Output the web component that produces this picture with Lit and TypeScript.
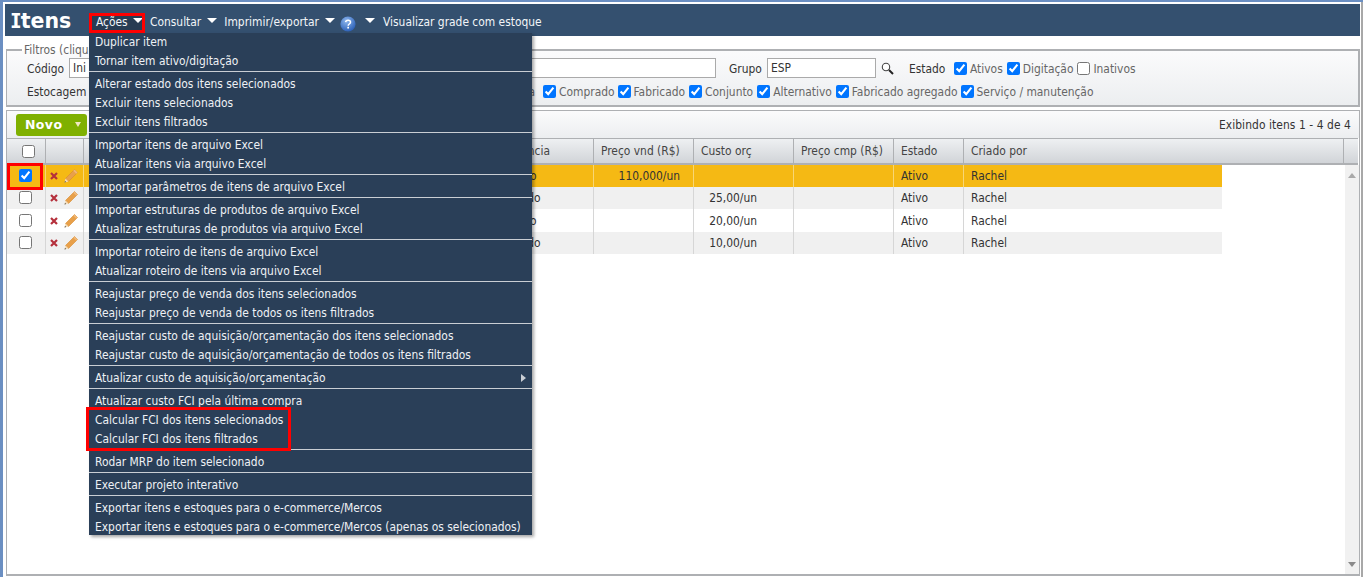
import { LitElement, html, css, svg } from "lit";
import { customElement } from "lit/decorators.js";

const MENU: (string | null)[] = [
  "Duplicar item", "Tornar item ativo/digitação", null,
  "Alterar estado dos itens selecionados", "Excluir itens selecionados", "Excluir itens filtrados", null,
  "Importar itens de arquivo Excel", "Atualizar itens via arquivo Excel", null,
  "Importar parâmetros de itens de arquivo Excel", null,
  "Importar estruturas de produtos de arquivo Excel", "Atualizar estruturas de produtos via arquivo Excel", null,
  "Importar roteiro de itens de arquivo Excel", "Atualizar roteiro de itens via arquivo Excel", null,
  "Reajustar preço de venda dos itens selecionados", "Reajustar preço de venda de todos os itens filtrados", null,
  "Reajustar custo de aquisição/orçamentação dos itens selecionados", "Reajustar custo de aquisição/orçamentação de todos os itens filtrados", null,
  "Atualizar custo de aquisição/orçamentação", null,
  "Atualizar custo FCI pela última compra", "Calcular FCI dos itens selecionados", "Calcular FCI dos itens filtrados", null,
  "Rodar MRP do item selecionado", null,
  "Executar projeto interativo", null,
  "Exportar itens e estoques para o e-commerce/Mercos", "Exportar itens e estoques para o e-commerce/Mercos (apenas os selecionados)",
];

const ROWS = [
  { sel: true, tipo: "Fabricado", vnd: "110,000/un", orc: "", h: 22 },
  { sel: false, tipo: "Comprado", vnd: "", orc: "25,00/un", h: 22 },
  { sel: false, tipo: "Fabricado", vnd: "", orc: "20,00/un", h: 23 },
  { sel: false, tipo: "Comprado", vnd: "", orc: "10,00/un", h: 22 },
];

const pencil = svg`<svg width="16" height="16" viewBox="0 0 16 16"><path d="M11.5 1.5l3 3L5.5 13.5l-3-3z" fill="#e8a04a" stroke="#d98a2e" stroke-width=".6"/><path d="M11.5 1.5l3 3-1.2 1.2-3-3z" fill="#f0b878"/><path d="M2.5 10.5l3 3-4 1z" fill="#f3dcb8"/><path d="M1.5 14.5l.5-1.6 1.1 1.1z" fill="#333"/></svg>`;
const cross = svg`<svg width="8" height="8" viewBox="0 0 8 8"><path d="M1 1l6 6M7 1L1 7" stroke="#b5303c" stroke-width="2.2"/></svg>`;
const lens = svg`<svg width="13" height="13" viewBox="0 0 13 13"><circle cx="5" cy="5" r="3.7" fill="#fff" stroke="#444" stroke-width="1.1"/><path d="M8 8l4 4" stroke="#222" stroke-width="2"/></svg>`;
const help = svg`<svg width="16" height="16" viewBox="0 0 16 16"><defs><radialGradient id="hg" cx=".4" cy=".3" r=".8"><stop offset="0" stop-color="#8fb8ee"/><stop offset="1" stop-color="#1f55b0"/></radialGradient></defs><circle cx="8" cy="8" r="7.6" fill="url(#hg)"/><path d="M5.6 6.2C5.8 4.8 6.8 4.2 8.1 4.2c1.4 0 2.4.8 2.4 2 0 1.8-2.3 1.8-2.3 3.5" fill="none" stroke="#fff" stroke-width="1.5"/><rect x="7.3" y="10.8" width="1.7" height="1.7" fill="#fff"/></svg>`;

const COLS = "39px 38px 116px 278px 116px 100px 100px 100px 70px 258px";

@customElement("app-root")
export class AppRoot extends LitElement {
  static styles = css`
    :host { display: block; width: 1363px; height: 577px; overflow: hidden; background: #6b8fc2; font-family: "DejaVu Sans Condensed", "DejaVu Sans", sans-serif; font-size: 11.9px; color: #333; }
    .root { position: relative; height: 575px; margin: 2px 0 0 3px; padding: 2px 1px 0 2px; background: #fff; box-sizing: border-box; border-right: 2px solid #a8a8a8; display: flex; flex-direction: column; }
    .head { height: 32px; flex: none; background: #34506f; display: flex; align-items: center; color: #f2f5f8; white-space: nowrap; }
    .title { font-weight: 700; font-size: 20.5px; color: #fff; font-family: "DejaVu Sans", sans-serif; width: 84px; padding-left: 6px; box-sizing: border-box; flex: none; }
    .title span { font-family: Inter, sans-serif; font-feature-settings: "cv08" 1; }
    .nav { display: flex; align-items: center; margin-top: 4px; }
    .nav span { flex: none; }
    .arrow { width: 0; height: 0; border: 5px solid transparent; border-top: 5px solid #fff; border-bottom: 0; flex: none; margin-bottom: 4px; }
    .nav-acoes { display: flex; align-items: center; width: 56px; height: 18px; padding-left: 7px; box-sizing: border-box; background: #283c53; gap: 5px; margin-right: 5px; }
    .nav-item { display: flex; align-items: center; gap: 6px; margin-right: 7px; }
    .help { display: flex; margin: 3px 9px 0 -2px; }
    .last-nav { margin-left: 8px; }
    fieldset { margin: 9px 0 0 1px; padding: 0 0 0 20px; height: 62px; box-sizing: border-box; border: 1px solid #aeb0b3; border-width: 2px 2px 2px 1px; background: linear-gradient(#fbfbfc, #eceef0); min-width: 0; }
    legend { padding: 0 2px; margin-left: -5px; color: #666; line-height: 10px; }
    .frow { display: flex; align-items: center; height: 23px; white-space: nowrap; }
    .f1 { margin-top: 2px; }
    .lab { color: #333; flex: none; }
    .cod { width: 42px; }
    .est { width: 60px; }
    .gru { margin-left: 13px; width: 38px; }
    .sta { width: 45px; }
    .inp { height: 20px; box-sizing: border-box; border: 1px solid #aaa; background: #fff; padding: 0 3px; flex: none; display: flex; align-items: center; color: #333; margin-bottom: 2px; }
    .i1 { width: 120px; }
    .i2 { width: 527px; }
    .i3 { width: 109px; }
    .lens { display: flex; margin-left: 5px; width: 28px; flex: none; }
    .chk { display: flex; align-items: center; flex: none; color: #666; gap: 3px; }
    .sp4 { width: 4px; flex: none; }
    .sp3 { width: 3px; flex: none; }
    .sp376 { width: 376px; flex: none; }
    .sp8 { width: 8px; flex: none; }
    .mat { width: 72px; justify-content: flex-end; }
    input[type="checkbox"] { margin: 0; width: 13px; height: 13px; flex: none; }
    .panel { margin: 3px 0 0 1px; height: 466px; box-sizing: border-box; border: 1px solid #aeb0b3; border-width: 1px 1px 2px 1px; display: flex; flex-direction: column; flex: none; }
    .bar { height: 27px; flex: none; display: flex; align-items: center; justify-content: space-between; padding: 0 8px 0 9px; background: linear-gradient(#fbfbfc, #eceef0); }
    .novo { width: 71px; height: 22px; background: #7fb000; border-radius: 3px; color: #fff; font-family: "DejaVu Sans", sans-serif; font-weight: 700; font-size: 12.5px; display: flex; align-items: center; justify-content: space-between; padding: 0 6px 0 9px; box-sizing: border-box; letter-spacing: .4px; }
    .novo i { width: 0; height: 0; border: 3px solid transparent; border-top: 5px solid #f0e8c0; border-bottom: 0; }
    .count { letter-spacing: .08px; }
    .grid { display: grid; flex: none; }
    .hc { height: 27px; box-sizing: border-box; background: linear-gradient(#eef0f2, #d1d4d8); border-top: 1px solid #aeb0b3; border-bottom: 2px solid #aeb0b3; border-right: 1px solid #aeb0b3; display: flex; align-items: center; padding-left: 7px; color: #444; white-space: nowrap; overflow: hidden; }
    .hc.c { padding: 0; justify-content: center; }
    .hc.ckh { padding: 0 0 0 5px; justify-content: center; }
    .hc.wide { grid-column: span 2; }
    .hc.last { border-right: 0; }
    .body { flex: 1; display: flex; min-height: 0; }
    .rows { flex: 1; min-width: 0; display: grid; align-content: start; }
    .d { display: flex; align-items: center; padding-left: 7px; box-sizing: border-box; border-right: 1px solid #d6d6d6; white-space: nowrap; overflow: hidden; color: #333; }
    .d.sel { background: #f5b914; border-right-color: #f8d676; }
    .d.even { background: #f0f0f0; }
    .d.r { justify-content: flex-end; padding: 0 13px 0 0; }
    .d.orc { padding-right: 36px; }
    .d.ck { padding: 0 1px 1px 0; justify-content: center; }
    .d.ac { padding: 0 0 0 4px; gap: 5px; }
    .d.end { border-right: 0; }
    .scroll { width: 14px; flex: none; background: #f1f1f1; display: flex; flex-direction: column; justify-content: space-between; align-items: center; padding: 8px 0 7px; box-sizing: border-box; }
    .up { width: 0; height: 0; border: 4px solid transparent; border-bottom: 5px solid #a9a9a9; border-top: 0; }
    .down { width: 0; height: 0; border: 4px solid transparent; border-top: 5px solid #8a8a8a; border-bottom: 0; }
    .menu { position: absolute; left: 86px; top: 31px; width: 443px; height: 502px; box-sizing: border-box; background: #2a3f58; color: #eef1f5; box-shadow: 2px 2px 3px rgba(0,0,0,.35); overflow: hidden; }
    .mlist { margin-top: -1px; }
    .mi { height: 19px; line-height: 16px; padding-left: 6px; white-space: nowrap; display: flex; justify-content: space-between; align-items: center; }
    .ms { height: 1px; background: #c9ced4; margin: 1px 0 2px; }
    .mi b { width: 0; height: 0; border: 4px solid transparent; border-left: 5px solid #c9ced4; border-right: 0; margin-right: 6px; }
    .red { position: absolute; border: 3px solid #f00; box-sizing: border-box; pointer-events: none; }
    .r1 { left: 86px; top: 11px; width: 56px; height: 20px; }
    .r2 { left: 83px; top: 405px; width: 205px; height: 44px; }
    .r3 { left: 4px; top: 161px; width: 36px; height: 27px; }
  `;

  private chk(label: string, on = true) {
    return html`<label class="chk"><input type="checkbox" .checked=${on} />${label}</label>`;
  }

  render() {
    const headers = ["", "", "Procedência", "Preço vnd (R$)", "Custo orç", "Preço cmp (R$)", "Estado"];
    return html`<div class="root">
      <div class="head">
        <div class="title"><span>I</span>tens</div>
        <div class="nav">
          <div class="nav-acoes"><span>Ações</span><i class="arrow"></i></div>
          <div class="nav-item"><span>Consultar</span><i class="arrow"></i></div>
          <div class="nav-item"><span>Imprimir/exportar</span><i class="arrow"></i></div>
          <div class="help">${help}</div>
          <i class="arrow"></i>
          <span class="last-nav">Visualizar grade com estoque</span>
        </div>
      </div>
      <fieldset>
        <legend>Filtros (clique</legend>
        <div class="frow f1">
          <span class="lab cod">Código</span>
          <div class="inp i1">Ini</div>
          <div class="inp i2"></div>
          <span class="lab gru">Grupo</span>
          <div class="inp i3">ESP</div>
          <span class="lens">${lens}</span>
          <span class="lab sta">Estado</span>
          ${this.chk("Ativos")}
          <span class="sp4"></span>
          ${this.chk("Digitação")}
          <span class="sp4"></span>
          ${this.chk("Inativos", false)}
        </div>
        <div class="frow">
          <span class="lab est">Estocagem</span>
          <span class="sp376"></span>
          <span class="chk mat">Matéria-prima</span>
          <span class="sp8"></span>
          ${this.chk("Comprado")}<span class="sp3"></span>
          ${this.chk("Fabricado")}<span class="sp4"></span>
          ${this.chk("Conjunto")}<span class="sp4"></span>
          ${this.chk("Alternativo")}<span class="sp4"></span>
          ${this.chk("Fabricado agregado")}<span class="sp3"></span>
          ${this.chk("Serviço / manutenção")}
        </div>
      </fieldset>
      <div class="panel">
        <div class="bar">
          <div class="novo">Novo<i></i></div>
          <span class="count">Exibindo itens 1 - 4 de 4</span>
        </div>
        <div class="grid" style="grid-template-columns:${COLS} 122px 14px">
          <div class="hc ckh"><input type="checkbox" /></div>
          <div class="hc c"></div>
          ${headers.map((h) => html`<div class="hc">${h}</div>`)}
          <div class="hc wide">Criado por</div>
          <div class="hc last"></div>
        </div>
        <div class="body">
          <div class="rows" style="grid-template-columns:${COLS}">
            ${ROWS.map((r, i) => {
              const bg = r.sel ? "sel" : i % 2 ? "even" : "";
              const st = `height:${r.h}px`;
              return html`
                <div class="d ck ${bg}" style=${st}><input type="checkbox" .checked=${r.sel} /></div>
                <div class="d ac ${bg}" style=${st}>${cross}${pencil}</div>
                <div class="d ${bg}" style=${st}></div>
                <div class="d ${bg}" style=${st}></div>
                <div class="d ${bg}" style=${st}>${r.tipo}</div>
                <div class="d r ${bg}" style=${st}>${r.vnd}</div>
                <div class="d r orc ${bg}" style=${st}>${r.orc}</div>
                <div class="d ${bg}" style=${st}></div>
                <div class="d ${bg}" style=${st}>Ativo</div>
                <div class="d end ${bg}" style=${st}>Rachel</div>`;
            })}
          </div>
          <div class="scroll"><i class="up"></i><i class="down"></i></div>
        </div>
      </div>
      <div class="menu"><div class="mlist">
        ${MENU.map((m) =>
          m === null
            ? html`<div class="ms"></div>`
            : html`<div class="mi"><span>${m}</span>${m === "Atualizar custo de aquisição/orçamentação" ? html`<b></b>` : ""}</div>`
        )}
      </div></div>
      <div class="red r1"></div>
      <div class="red r2"></div>
      <div class="red r3"></div>
    </div>`;
  }
}
